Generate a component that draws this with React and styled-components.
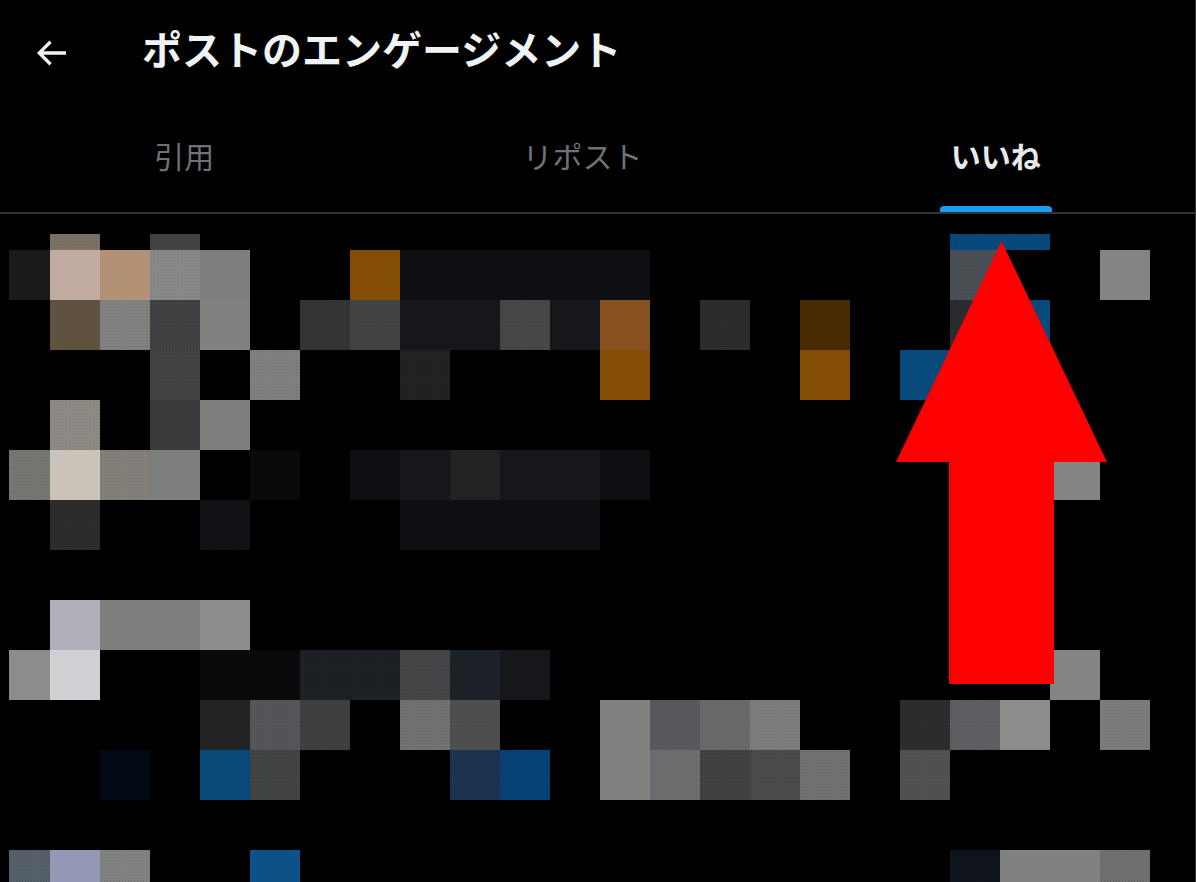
import React from "react";
import styled, { createGlobalStyle } from "styled-components";

const GlobalStyle = createGlobalStyle`
  html, body {
    margin: 0;
    background: #000;
    overflow: hidden;
  }
  body {
    font-family: "Noto Sans CJK JP", "Liberation Sans", sans-serif;
  }
`;

const Page = styled.div`
  position: relative;
  width: 1196px;
  height: 882px;
  box-sizing: border-box;
  overflow: hidden;
  background: #000;
  border-right: 1px solid #2f3336;
`;

const Header = styled.header`
  display: flex;
  align-items: center;
  gap: 72px;
  height: 106px;
  padding: 0 0 6px 31px;
  box-sizing: border-box;
`;

const BackButton = styled.button`
  display: flex;
  width: 40px;
  height: 40px;
  margin-top: 6px;
  padding: 0;
  border: none;
  background: transparent;
  color: #eff3f4;
`;

const Title = styled.h1`
  margin: -4px 0 0 -1px;
  font-size: 40px;
  font-weight: 700;
  line-height: 48px;
  color: #eff3f4;
`;

const Tabs = styled.nav`
  display: flex;
  height: 108px;
  box-sizing: border-box;
  border-bottom: 2px solid #2f3336;
`;

const Tab = styled.div`
  position: relative;
  flex: 1 1 auto;
  display: flex;
  align-items: center;
  justify-content: center;
  font-size: 30px;
  line-height: 40px;
  padding-bottom: 8px;
  font-weight: ${(p) => (p.$active ? 700 : 400)};
  color: ${(p) => (p.$active ? "#e7e9ea" : "#6f7275")};
`;

const Underline = styled.span`
  position: absolute;
  left: 50%;
  bottom: 0;
  width: 112px;
  height: 6px;
  margin-left: -56px;
  border-radius: 4px 4px 0 0;
  background: #1d9bf0;
`;

// the blurred list below the tabs, one tile per mosaic block
const Mosaic = styled.div`
  display: grid;
  grid-template-columns: 41px repeat(22, 50px);
  grid-template-rows: 16px repeat(13, 50px);
  margin: 20px 0 0 9px;
`;

const Tile = styled.div`
  background-color: ${(p) => p.$tone || "transparent"};
  ${(p) =>
    p.$grain &&
    `
    background-image: radial-gradient(rgba(0, 0, 0, 0.13) 0.7px, transparent 0.9px);
    background-size: 3px 3px;
  `}
`;

const Arrow = styled.svg`
  position: absolute;
  left: 896px;
  top: 241px;
`;

const tones = [
  { 1: "#7d7064", 3: "#434343", 19: "#07497a", 20: "#07497a" },
  { 0: "#1d1a1c", 1: "#c2aca2", 2: "#b39175", 3: "#878a88", 4: "#7d7f7d", 7: "#834d05", 8: "#0d0f12", 9: "#0d0f12", 10: "#0d0f12", 11: "#0d0f12", 12: "#0d0f12", 19: "#4b5056", 22: "#838583" },
  { 1: "#5f523f", 2: "#808280", 3: "#414244", 4: "#808280", 6: "#333435", 7: "#434446", 8: "#15171a", 9: "#15171a", 10: "#464748", 11: "#15171a", 12: "#86511e", 14: "#2d2d2e", 16: "#492a05", 19: "#2a2d30", 20: "#07497a" },
  { 3: "#424345", 5: "#7f817f", 8: "#212223", 12: "#834d05", 16: "#834d05", 18: "#07497a" },
  { 1: "#8f8a84", 3: "#3a3b3c", 4: "#7d7f7d" },
  { 0: "#777772", 1: "#c9c3ba", 2: "#857f7a", 3: "#7d7f7d", 5: "#090b0a", 7: "#0d0f12", 8: "#15171a", 9: "#212223", 10: "#15171a", 11: "#15171a", 12: "#0d0f12", 21: "#838583" },
  { 1: "#2d2d2d", 4: "#101216", 8: "#0d0f12", 9: "#0d0f12", 10: "#0d0f12", 11: "#0d0f12" },
  {},
  { 1: "#b0b0ba", 2: "#7d7f7d", 3: "#7d7f7d", 4: "#8b8d8b" },
  { 0: "#8b8d8b", 1: "#d0d1d5", 4: "#090b0a", 5: "#090b0a", 6: "#1d2024", 7: "#1d2024", 8: "#444546", 9: "#1c2228", 10: "#15171a", 21: "#838583" },
  { 4: "#222325", 5: "#55565a", 6: "#3f4042", 8: "#717371", 9: "#4f4f4f", 12: "#808280", 13: "#58585c", 14: "#686a68", 15: "#7c7e7c", 18: "#2d2d2d", 19: "#5e5f63", 20: "#8b8d8b", 22: "#7a7c7a" },
  { 2: "#010a14", 4: "#0a4a78", 5: "#434446", 9: "#1c3450", 10: "#074274", 12: "#808280", 13: "#6e6e70", 14: "#414244", 15: "#4a4b4c", 16: "#717371", 18: "#525252" },
  {},
  { 0: "#55606a", 1: "#9498b6", 2: "#808380", 5: "#0c5288", 19: "#0f141c", 20: "#808280", 21: "#808280", 22: "#6f716f" },
];

// blocks that show jpeg speckle in the picture, row -> columns
const grainy = {
  0: [1, 3, 19, 20],
  1: [0, 3, 19],
  2: [2, 3, 6, 7, 8, 9, 10, 11, 14, 19],
  3: [3, 5, 8],
  4: [1, 3],
  5: [0, 2],
  6: [1, 4],
  9: [6, 7, 8, 9],
  10: [5, 6, 8, 9, 15, 18, 19, 22],
  11: [5, 9, 10, 13, 14, 15, 16, 18],
  13: [0, 2, 19, 22],
};

const tabs = ["引用", "リポスト", "いいね"];

const App = () => {
  return (
    <Page>
      <GlobalStyle />
      <Header>
        <BackButton aria-label="戻る">
          <svg viewBox="0 0 24 24" width="40" height="40" fill="currentColor">
            <path d="M7.414 13l5.043 5.04-1.414 1.42L3.586 12l7.457-7.46 1.414 1.42L7.414 11H21v2H7.414z" />
          </svg>
        </BackButton>
        <Title>ポストのエンゲージメント</Title>
      </Header>
      <Tabs>
        {tabs.map((label, i) => (
          <Tab key={label} $active={i === 2}>
            {label}
            {i === 2 && <Underline />}
          </Tab>
        ))}
      </Tabs>
      <Mosaic>
        {tones.map((row, r) =>
          Array.from({ length: 23 }, (_, c) => (
            <Tile key={`${r}-${c}`} $tone={row[c]} $grain={grainy[r]?.includes(c)} />
          ))
        )}
      </Mosaic>
      <Arrow width="211" height="443" viewBox="0 0 211 443">
        <polygon points="105.5,0 211,221 158,221 158,443 53,443 53,221 0,221" fill="#ff0000" />
      </Arrow>
    </Page>
  );
};

export default App;
